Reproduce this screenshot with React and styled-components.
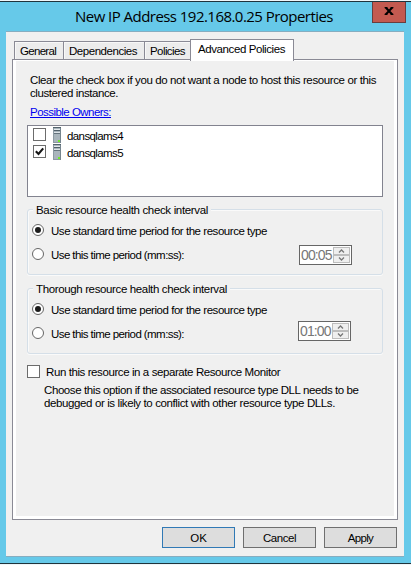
import React from 'react';
import styled, { createGlobalStyle } from 'styled-components';

const GlobalStyle = createGlobalStyle`
  *, *::before { box-sizing: border-box; }
  body { margin: 0; background: #eef6f9; }
`;

const Window = styled.div`
  width: 411px;
  height: 563px;
  margin-top: 1px;
  display: flex;
  flex-direction: column;
  overflow: hidden;
  border-top: 1px solid #20343c;
  border-bottom: 1px solid #20343c;
  background: #66c9e9;
  color: #000;
  font: 11.5px/13px "Liberation Sans", Arial, sans-serif;
`;

const TitleBar = styled.header`
  flex: none;
  height: 29px;
  display: flex;
  align-items: flex-start;
  padding: 0 5px 0 75px;
`;

const Title = styled.h1`
  flex: 1;
  margin: 4px 0 0;
  font: 400 15px/20px "Open Sans", "Segoe UI", sans-serif;
  letter-spacing: -0.54px;
  white-space: nowrap;
`;

const CloseButton = styled.button`
  width: 34px;
  height: 21px;
  padding: 0 0 2px;
  display: flex;
  align-items: center;
  justify-content: center;
  border: 1px solid #6b3d3d;
  border-top: 0;
  background: #c35a50;
`;

const Client = styled.main`
  flex: none;
  height: 526px;
  margin: 0 7px 0 6px;
  display: flex;
  flex-direction: column;
  padding: 7px 6px 0;
  border-top: 1px solid #86adc0;
  border-bottom: 1px solid #86adc0;
  background: #f0f0f0;
`;

const Tabs = styled.nav`
  flex: none;
  display: flex;
  align-items: flex-end;
  height: 20px;
  padding-left: 2px;
`;

const Tab = styled.button`
  position: relative;
  width: ${p => p.$width}px;
  height: ${p => (p.$active ? 22 : 18)}px;
  margin-bottom: ${p => (p.$active ? -2 : 0)}px;
  padding: ${p => (p.$active ? '3px 0 0 7px' : '3px 0 0 5px')};
  display: flex;
  align-items: flex-start;
  border: 1px solid #8a8a95;
  border-bottom: 0;
  border-right-width: ${p => (p.$active ? 1 : 0)}px;
  background: ${p => (p.$active ? '#fff' : '#ececec')};
  box-shadow: ${p => (p.$active ? 'none' : 'inset 1px 1px #f8f8f8')};
  color: #000;
  font: inherit;
  letter-spacing: ${p => p.$track}px;
  white-space: nowrap;
`;

const Panel = styled.section`
  flex: none;
  height: 461px;
  padding: 1px 3px 3px;
  border: 1px solid #8a8a95;
  background: #fff;
`;

const PanelBody = styled.div`
  height: 100%;
  padding: 13px 11px 0;
  display: flex;
  flex-direction: column;
  background: #f0f0f0;
`;

const Line = styled.span`
  display: block;
  letter-spacing: ${p => p.$track}px;
  white-space: nowrap;
`;

const Paragraph = styled.div`
  padding-left: ${p => p.$indent}px;
  margin-top: ${p => p.$gap || 0}px;
`;

const OwnersLink = styled.a`
  align-self: flex-start;
  margin: 6px 0 0 3px;
  color: #0000f0;
  letter-spacing: -0.53px;
  text-decoration: underline;
  white-space: nowrap;
`;

const OwnerList = styled.div`
  flex: none;
  height: 72px;
  margin-top: 6px;
  padding: 1px 5px;
  border: 1px solid #82838f;
  background: #fff;
`;

const OwnerRow = styled.div`
  height: 17px;
  display: flex;
  align-items: flex-start;
  padding-top: 1px;

  svg { margin: -1px 6px 0 7px; }
  ${Line} { margin-top: 2px; }
`;

const CheckBox = styled.span`
  flex: none;
  width: 13px;
  height: 13px;
  display: flex;
  border: 1px solid #6c6c6c;
  background: #fff;

  && svg { margin: 0; }
`;

const Group = styled.section`
  flex: none;
  height: 66px;
  margin-top: ${p => p.$gap}px;
  padding-left: 4px;
  border: 1px solid #d5dfe8;
  border-radius: 3px;
  box-shadow: inset 1px 1px #fafafa, 0 1px #fafafa;
`;

const GroupTitle = styled.h2`
  width: max-content;
  height: 13px;
  margin: -6px 0 8px 1px;
  padding: 0 3px;
  background: #f0f0f0;
  font: inherit;
`;

const RadioRow = styled.div`
  height: ${p => p.$height}px;
  margin-bottom: 7px;
  display: flex;
  align-items: center;
`;

const Radio = styled.span`
  flex: none;
  width: 12px;
  height: 12px;
  margin: 0 7px 3px 0;
  display: flex;
  align-items: center;
  justify-content: center;
  border: 1px solid #666;
  border-radius: 50%;
  background: #fff;

  &::before {
    content: "";
    width: 6px;
    height: 6px;
    border-radius: 50%;
    background: ${p => (p.$on ? '#1c1c1c' : 'transparent')};
  }
`;

const Spinner = styled.div`
  width: 53px;
  height: 20px;
  margin: 0 ${p => 30 + p.$shift}px ${p => p.$shift * 6}px auto;
  display: flex;
  justify-content: space-between;
  padding: 1px;
  border: 1px solid #666;
  background: #fff;
  color: #777;
  font-size: 14px;
  line-height: 16px;
  letter-spacing: -0.9px;
`;

const Arrows = styled.div`
  width: 17px;
  display: grid;
  grid-template-rows: 1fr 1fr;
`;

const Arrow = styled.span`
  display: flex;
  align-items: center;
  justify-content: center;
  border: 1px solid #bdbdbd;
  background: #efefef;
`;

const CheckRow = styled.div`
  display: flex;
  height: 14px;
  margin-top: 11px;

  ${Line} { margin: 1px 0 0 6px; }
`;

const Footer = styled.footer`
  display: flex;
  justify-content: flex-end;
  gap: 8px;
  padding: 7px 1px 0 0;
`;

const Button = styled.button`
  width: 73px;
  height: 21px;
  padding: 1px 0 0;
  border: 1px solid ${p => (p.$primary ? '#3079b5' : '#6f6f6f')};
  background: #dddddd;
  color: #000;
  font: inherit;
  letter-spacing: ${p => p.$track}px;
`;

const ServerIcon = () => (
  <svg width="8" height="17" viewBox="0 0 8 17" shapeRendering="crispEdges">
    <rect width="8" height="16" fill="#8d9aa2" />
    <rect x="1" y="1" width="6" height="14" fill="#a9b5bc" />
    <rect width="8" height="1" fill="#53636d" />
    <rect x="1" y="2" width="6" height="1" fill="#e4eaed" />
    <rect x="1" y="3" width="6" height="1" fill="#52616a" />
    <rect x="1" y="5" width="6" height="1" fill="#dce3e7" />
    <rect x="1" y="6" width="6" height="1" fill="#65747d" />
    <rect x="7" y="1" width="1" height="15" fill="#75858e" />
    <rect x="5" y="13" width="2" height="2" fill="#70ee25" />
  </svg>
);

const TickIcon = () => (
  <svg width="11" height="11" viewBox="0 0 11 11">
    <path d="M1.8 5.2 L4.5 8 L9.2 2.3" fill="none" stroke="#151515" strokeWidth="2.1" />
  </svg>
);

const CloseIcon = () => (
  <svg width="10" height="8" viewBox="0 0 10 8">
    <path d="M1.8 0.6 L8.2 7.4 M8.2 0.6 L1.8 7.4" stroke="#000" strokeWidth="2.2" />
    <path d="M0.6 0.6H3.4M6.6 0.6H9.4M0.6 7.4H3.4M6.6 7.4H9.4" stroke="#000" strokeWidth="1.2" />
  </svg>
);

const Chevron = ({ down }) => (
  <svg width="7" height="4" viewBox="0 0 7 4">
    <path d={down ? 'M1 0.5 L3.5 3 L6 0.5' : 'M1 3.5 L3.5 1 L6 3.5'} fill="none" stroke="#777" strokeWidth="1.3" />
  </svg>
);

const tabs = [
  { label: 'General', width: 49, track: -0.7 },
  { label: 'Dependencies', width: 81, track: -0.46 },
  { label: 'Policies', width: 46, track: -0.58 },
  { label: 'Advanced Policies', width: 104, track: -0.41, active: true },
];

const owners = [
  { name: 'dansqlams4', checked: false },
  { name: 'dansqlams5', checked: true },
];

const IntervalGroup = ({ title, track, time, gap, shift = 0 }) => (
  <Group $gap={gap}>
    <GroupTitle><Line $track={track}>{title}</Line></GroupTitle>
    <RadioRow $height={13}>
      <Radio $on />
      <Line $track={-0.46}>Use standard time period for the resource type</Line>
    </RadioRow>
    <RadioRow $height={20}>
      <Radio />
      <Line $track={-0.57}>Use this time period (mm:ss):</Line>
      <Spinner $shift={shift}>
        {time}
        <Arrows>
          <Arrow><Chevron /></Arrow>
          <Arrow><Chevron down /></Arrow>
        </Arrows>
      </Spinner>
    </RadioRow>
  </Group>
);

export default function App() {
  return (
    <>
      <GlobalStyle />
      <Window>
        <TitleBar>
          <Title>New IP Address 192.168.0.25 Properties</Title>
          <CloseButton aria-label="Close"><CloseIcon /></CloseButton>
        </TitleBar>
        <Client>
          <Tabs>
            {tabs.map(t => (
              <Tab key={t.label} $width={t.width} $track={t.track} $active={t.active}>{t.label}</Tab>
            ))}
          </Tabs>
          <Panel>
            <PanelBody>
              <Paragraph $indent={3}>
                <Line $track={-0.38}>Clear the check box if you do not want a node to host this resource or this</Line>
                <Line $track={-0.41}>clustered instance.</Line>
              </Paragraph>
              <OwnersLink>Possible Owners:</OwnersLink>
              <OwnerList>
                {owners.map(o => (
                  <OwnerRow key={o.name}>
                    <CheckBox>{o.checked && <TickIcon />}</CheckBox>
                    <ServerIcon />
                    <Line $track={-0.6}>{o.name}</Line>
                  </OwnerRow>
                ))}
              </OwnerList>
              <IntervalGroup title="Basic resource health check interval" track={-0.335} time="00:05" gap={12} />
              <IntervalGroup title="Thorough resource health check interval" track={-0.365} time="01:00" gap={13} shift={1} />
              <CheckRow>
                <CheckBox />
                <Line $track={-0.41}>Run this resource in a separate Resource Monitor</Line>
              </CheckRow>
              <Paragraph $indent={17} $gap={5}>
                <Line $track={-0.41}>Choose this option if the associated resource type DLL needs to be</Line>
                <Line $track={-0.387}>debugged or is likely to conflict with other resource type DLLs.</Line>
              </Paragraph>
            </PanelBody>
          </Panel>
          <Footer>
            <Button $primary $track={0}>OK</Button>
            <Button $track={-0.47}>Cancel</Button>
            <Button $track={-0.7}>Apply</Button>
          </Footer>
        </Client>
      </Window>
    </>
  );
}
